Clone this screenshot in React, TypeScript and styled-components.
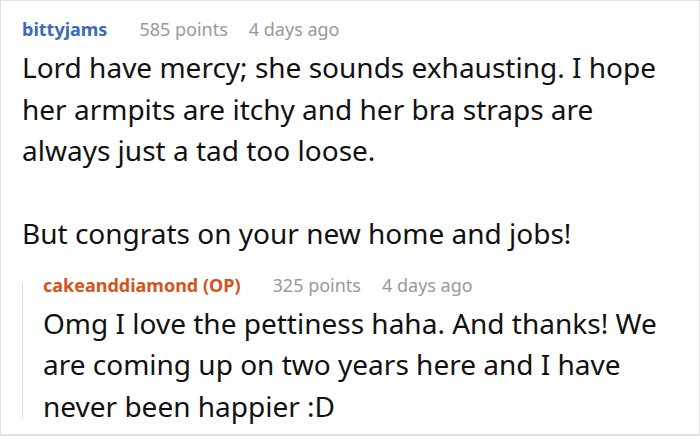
import React from 'react';
import styled, { createGlobalStyle } from 'styled-components';

const GlobalStyle = createGlobalStyle`
  html, body {
    margin: 0;
    padding: 0;
    background: #ffffff;
  }
  body {
    font-family: 'Noto Sans', 'Open Sans', sans-serif;
  }
`;

const Frame = styled.div`
  box-sizing: border-box;
  width: 700px;
  height: 436px;
  border: 1px solid #e2e2e2;
  border-bottom-width: 2px;
  padding: 14px 20px 0 21px;
  overflow: hidden;
`;

const Comment = styled.div`
  display: flex;
  flex-direction: column;
`;

const Meta = styled.div`
  display: flex;
  align-items: baseline;
  font-size: 18px;
  line-height: 28px;
  margin-bottom: 4px;
`;

const Author = styled.span<{ $op?: boolean }>`
  font-weight: 700;
  color: ${(p) => (p.$op ? '#d4541c' : '#3a6bb6')};
  margin-right: 32px;
`;

const Points = styled.span`
  color: #999999;
  margin-right: 21px;
`;

const Age = styled.span`
  color: #999999;
`;

const Body = styled.div`
  font-size: 28px;
  line-height: 41.5px;
  color: #111111;

  p {
    margin: 0;
  }
`;

const Replies = styled.div`
  position: relative;
  margin-top: 16px;
  padding-left: 21px;

  &::before {
    content: '';
    position: absolute;
    left: 0;
    top: 12px;
    bottom: 8px;
    width: 1px;
    background: #dddddd;
  }
`;

interface CommentData {
  author: string;
  op?: boolean;
  points: number;
  age: string;
  paragraphs: string[];
}

const parent: CommentData = {
  author: 'bittyjams',
  points: 585,
  age: '4 days ago',
  paragraphs: [
    'Lord have mercy; she sounds exhausting. I hope her armpits are itchy and her bra straps are always just a tad too loose.',
    '',
    'But congrats on your new home and jobs!',
  ],
};

const reply: CommentData = {
  author: 'cakeanddiamond (OP)',
  op: true,
  points: 325,
  age: '4 days ago',
  paragraphs: [
    'Omg I love the pettiness haha. And thanks! We are coming up on two years here and I have never been happier :D',
  ],
};

const CommentView: React.FC<{ data: CommentData; children?: React.ReactNode }> = ({ data, children }) => (
  <Comment>
    <Meta>
      <Author $op={data.op}>{data.author}</Author>
      <Points>{data.points} points</Points>
      <Age>{data.age}</Age>
    </Meta>
    <Body>
      {data.paragraphs.map((text, i) => (
        <p key={i}>{text || '\u00a0'}</p>
      ))}
    </Body>
    {children}
  </Comment>
);

const App: React.FC = () => (
  <>
    <GlobalStyle />
    <Frame>
      <CommentView data={parent}>
        <Replies>
          <CommentView data={reply} />
        </Replies>
      </CommentView>
    </Frame>
  </>
);

export default App;
